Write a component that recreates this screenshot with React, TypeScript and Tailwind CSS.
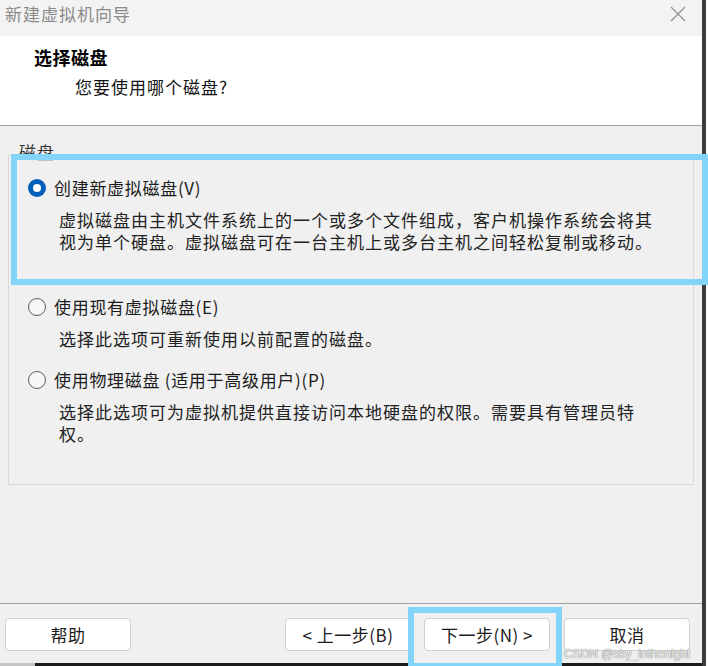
import React from "react";

const font = "font-['Noto_Sans_CJK_SC','Noto_Sans',sans-serif]";

function Radio({checked}: {checked?: boolean}) {
  if (checked) {
    return (
      <span className="flex h-[18px] w-[18px] shrink-0 items-center justify-center rounded-full bg-[#005fb8]">
        <span className="h-[8px] w-[8px] rounded-full bg-white" />
      </span>
    );
  }
  return <span className="h-[18px] w-[18px] shrink-0 rounded-full border border-[#5c5c5c] bg-[#f7f7f7]" />;
}

function Option({
  label,
  lines,
  checked,
  className,
}: {
  label: React.ReactNode;
  lines: string[];
  checked?: boolean;
  className?: string;
}) {
  return (
    <div className={className}>
      <div className="flex h-[22px] items-center gap-[8px]">
        <Radio checked={checked} />
        <span className="text-[17px] leading-[22px] tracking-[0.7px] text-[#1b1b1b]">{label}</span>
      </div>
      <div className="mt-[10px] ml-[31px] text-[17px] leading-[22px] tracking-[1px] text-[#222]">
        {lines.map((l) => (
          <div key={l} className="whitespace-nowrap">
            {l}
          </div>
        ))}
      </div>
    </div>
  );
}

function Button({children}: {children: React.ReactNode}) {
  return (
    <div className="flex h-[33px] w-[126px] items-center justify-center rounded-[4px] border border-[#d0d0d0] bg-white text-[17px] tracking-[0.5px] text-[#1b1b1b]">
      {children}
    </div>
  );
}

export default function App() {
  return (
    <div className={`relative flex h-[666px] w-[708px] overflow-hidden bg-white ${font}`}>
      <div className="flex h-full w-[702px] flex-col">
        {/* Title bar */}
        <div className="flex h-[36px] items-start justify-between bg-[#f3f3f3] pt-[3px] pl-[5px] pr-[16px]">
          <span className="text-[17px] leading-[22px] tracking-[1px] text-[#8a8a8a]">新建虚拟机向导</span>
          <svg width="16" height="16" viewBox="0 0 16 16" className="mt-[3px]">
            <path d="M1 1L15 15M15 1L1 15" stroke="#8f8f8f" strokeWidth="1.2" fill="none" />
          </svg>
        </div>

        {/* Header */}
        <div className="h-[89px] bg-white pt-[9px]">
          <div className="pl-[34px] text-[18px] leading-[24px] font-bold tracking-[0.5px] text-black">选择磁盘</div>
          <div className="mt-[6px] pl-[75px] text-[17px] leading-[24px] tracking-[1px] text-[#111]">
            您要使用哪个磁盘?
          </div>
        </div>
        <div className="h-px bg-[#a0a0a0]" />

        {/* Body */}
        <div className="h-[477px] bg-[#f0f0f0] px-[8px] pt-[29px]">
          <div className="relative h-[330px] border border-[#d9d9d9] pt-[21px] pl-[19px]">
            <span className="absolute -top-[15px] left-[9px] bg-[#f0f0f0] px-px text-[17px] leading-[22px] tracking-[1px] text-[#333]">
              磁盘
            </span>
            <Option
              checked
              label="创建新虚拟磁盘(V)"
              lines={[
                "虚拟磁盘由主机文件系统上的一个或多个文件组成，客户机操作系统会将其",
                "视为单个硬盘。虚拟磁盘可在一台主机上或多台主机之间轻松复制或移动。",
              ]}
            />
            <Option
              className="mt-[43px]"
              label="使用现有虚拟磁盘(E)"
              lines={["选择此选项可重新使用以前配置的磁盘。"]}
            />
            <Option
              className="mt-[19px]"
              label="使用物理磁盘 (适用于高级用户)(P)"
              lines={["选择此选项可为虚拟机提供直接访问本地硬盘的权限。需要具有管理员特", "权。"]}
            />
          </div>
        </div>
        <div className="h-px bg-[#a0a0a0]" />

        {/* Footer */}
        <div className="flex h-[59px] items-start justify-between bg-[#f0f0f0] pt-[14px] pl-[5px] pr-[12px]">
          <Button>帮助</Button>
          <div className="flex">
            <Button>&lt; 上一步(B)</Button>
            <div className="ml-[13px]">
              <Button>下一步(N) &gt;</Button>
            </div>
            <div className="ml-[14px]">
              <Button>取消</Button>
            </div>
          </div>
        </div>
        <div className="flex h-[3px]">
          <div className="w-[35px] bg-[#c4c4c4]" />
          <div className="flex-1 bg-[#1c1c1c]" />
        </div>
      </div>
      <div className="h-full w-[4px] bg-[#3c3c3c]" />
      <div className="h-full flex-1 bg-white" />

      {/* Highlight annotations */}
      <div className="pointer-events-none absolute top-[154px] left-[11px] h-[131px] w-[697px] border-[6px] border-[#82d4fa]" />
      <div className="pointer-events-none absolute top-[607px] left-[408px] h-[62px] w-[154px] border-[6px] border-[#82d4fa]" />

      {/* Watermark */}
      <span className="pointer-events-none absolute top-[646px] left-[564px] font-['Liberation_Sans',sans-serif] text-[12px] leading-[16px] text-[#f2f2f2] [text-shadow:0_0_1px_#7a7a7a,0_0_1px_#7a7a7a]">
        CSDN @sky_inthenight
      </span>
    </div>
  );
}
